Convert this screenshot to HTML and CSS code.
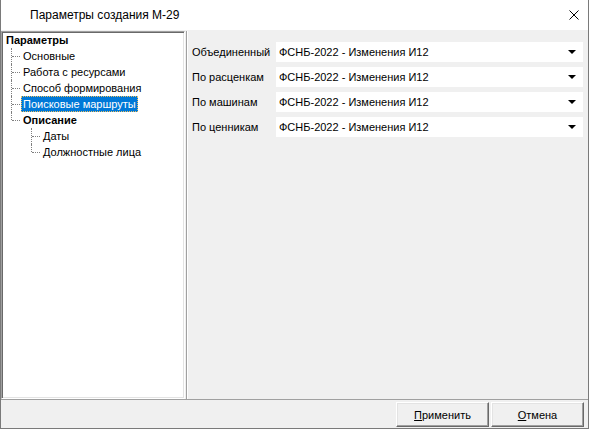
FILE: index.html
```html
<!DOCTYPE html>
<html lang="ru">
<head>
<meta charset="utf-8">
<title>Параметры создания М-29</title>
<link rel="stylesheet" href="styles.css">
</head>
<body>
<div class="window">
  <div class="titlebar">
    <span class="title">Параметры создания М-29</span>
    <svg class="close" width="10" height="10" viewBox="0 0 10 10"><path d="M0.5 0.5L9.5 9.5M9.5 0.5L0.5 9.5" stroke="#000" stroke-width="1" fill="none"/></svg>
  </div>
  <div class="main">
    <div class="tree">
      <div class="row root"><span class="label bold">Параметры</span></div>
      <ul class="branch lvl1">
        <li><div class="row"><span class="label">Основные</span></div></li>
        <li><div class="row"><span class="label">Работа с ресурсами</span></div></li>
        <li><div class="row"><span class="label">Способ формирования</span></div></li>
        <li><div class="row"><span class="label selected">Поисковые маршруты</span></div></li>
        <li class="last"><div class="row"><span class="label bold">Описание</span></div>
          <ul class="branch lvl2">
            <li><div class="row"><span class="label">Даты</span></div></li>
            <li class="last"><div class="row"><span class="label">Должностные лица</span></div></li>
          </ul>
        </li>
      </ul>
    </div>
    <div class="panel">
      <div class="field"><span class="flabel">Объединенный</span><div class="combo"><span>ФСНБ-2022 - Изменения И12</span><i class="arrow"></i></div></div>
      <div class="field"><span class="flabel">По расценкам</span><div class="combo"><span>ФСНБ-2022 - Изменения И12</span><i class="arrow"></i></div></div>
      <div class="field"><span class="flabel">По машинам</span><div class="combo"><span>ФСНБ-2022 - Изменения И12</span><i class="arrow"></i></div></div>
      <div class="field"><span class="flabel">По ценникам</span><div class="combo"><span>ФСНБ-2022 - Изменения И12</span><i class="arrow"></i></div></div>
    </div>
  </div>
  <div class="footer">
    <button class="btn"><u>П</u>рименить</button>
    <button class="btn"><u>О</u>тмена</button>
  </div>
</div>
</body>
</html>
```
FILE: styles.css
```css
html, body {
  margin: 0;
  padding: 0;
}
body {
  width: 589px;
  height: 429px;
  background: #f0f0f0;
  font-family: "Liberation Sans", Arial, sans-serif;
  font-size: 11px;
  color: #000;
  overflow: hidden;
}
.window {
  box-sizing: border-box;
  width: 589px;
  height: 429px;
  border: 1px solid #7a7a7a;
  border-top: none;
  display: flex;
  flex-direction: column;
  background: #f0f0f0;
}
.titlebar {
  height: 30px;
  flex: none;
  background: #fff;
  display: flex;
  align-items: center;
  justify-content: space-between;
  padding: 0 9px 0 29px;
}
.title {
  font-family: "Liberation Sans", Arial, sans-serif;
  font-size: 12px;
  color: #000;
}
.close {
  display: block;
}
.main {
  flex: none;
  height: 369px;
  display: flex;
  padding-top: 1px;
  box-sizing: border-box;
}
.tree {
  box-sizing: border-box;
  width: 184px;
  height: 368px;
  background: #fff;
  border-top: 1px solid #a0a0a0;
  border-left: 1px solid #a0a0a0;
  border-right: 1px solid #fff;
  border-bottom: 1px solid #fff;
  box-shadow: inset 1px 1px 0 #696969, inset -1px -1px 0 #e3e3e3;
  padding-top: 0;
}
.row {
  height: 16px;
  display: flex;
  align-items: center;
  position: relative;
}
.root {
  padding-left: 2px;
}
.label {
  display: block;
  height: 16px;
  line-height: 16px;
  padding: 0 2px;
  box-sizing: border-box;
  white-space: nowrap;
}
.bold {
  font-weight: bold;
}
.selected {
  background: #0078d7;
  color: #fff;
  outline: 1px dotted #f0c060;
  outline-offset: -1px;
}
.branch {
  list-style: none;
  margin: 0;
  padding: 0;
}
.branch li {
  position: relative;
}
.lvl1 > li > .row {
  padding-left: 19px;
}
.lvl2 > li > .row {
  padding-left: 39px;
}
.branch > li::after {
  content: "";
  position: absolute;
  top: 0;
  height: 16px;
  border-left: 1px dotted #808080;
}
.branch > li.last::after {
  height: 8px;
}
.lvl1 > li::after {
  left: 9px;
}
.lvl2 > li::after {
  left: 29px;
}
.branch > li > .row::before {
  content: "";
  position: absolute;
  top: 8px;
  width: 8px;
  border-top: 1px dotted #808080;
}
.lvl1 > li > .row::before {
  left: 10px;
}
.lvl2 > li > .row::before {
  left: 30px;
}
.panel {
  flex: 1;
  box-sizing: border-box;
  margin-left: 1px;
  border-left: 1px solid #a0a0a0;
  box-shadow: inset 1px 0 0 #fff;
  padding: 11px 5px 0 5px;
  display: flex;
  flex-direction: column;
  gap: 5px;
}
.field {
  display: flex;
  align-items: center;
  height: 20px;
}
.flabel {
  width: 84px;
  flex: none;
  white-space: nowrap;
}
.combo {
  flex: 1;
  height: 20px;
  background: #fff;
  display: flex;
  align-items: center;
  justify-content: space-between;
  padding: 0 7px 0 3px;
}
.arrow {
  width: 0;
  height: 0;
  border-left: 4px solid transparent;
  border-right: 4px solid transparent;
  border-top: 4px solid #000;
}
.footer {
  flex: 1;
  border-top: 1px solid #a0a0a0;
  display: flex;
  justify-content: flex-end;
  align-items: flex-start;
  gap: 2px;
  padding: 2px 4px 0 0;
}
.btn {
  width: 93px;
  height: 25px;
  box-sizing: border-box;
  background: #f0f0f0;
  font-family: "Liberation Sans", Arial, sans-serif;
  font-size: 11px;
  color: #000;
  border-top: 1px solid #fff;
  border-left: 1px solid #fff;
  border-right: 1px solid #696969;
  border-bottom: 1px solid #696969;
  box-shadow: inset -1px -1px 0 #a0a0a0, inset 1px 1px 0 #e3e3e3;
  padding: 0;
  margin: 0;
}
```
